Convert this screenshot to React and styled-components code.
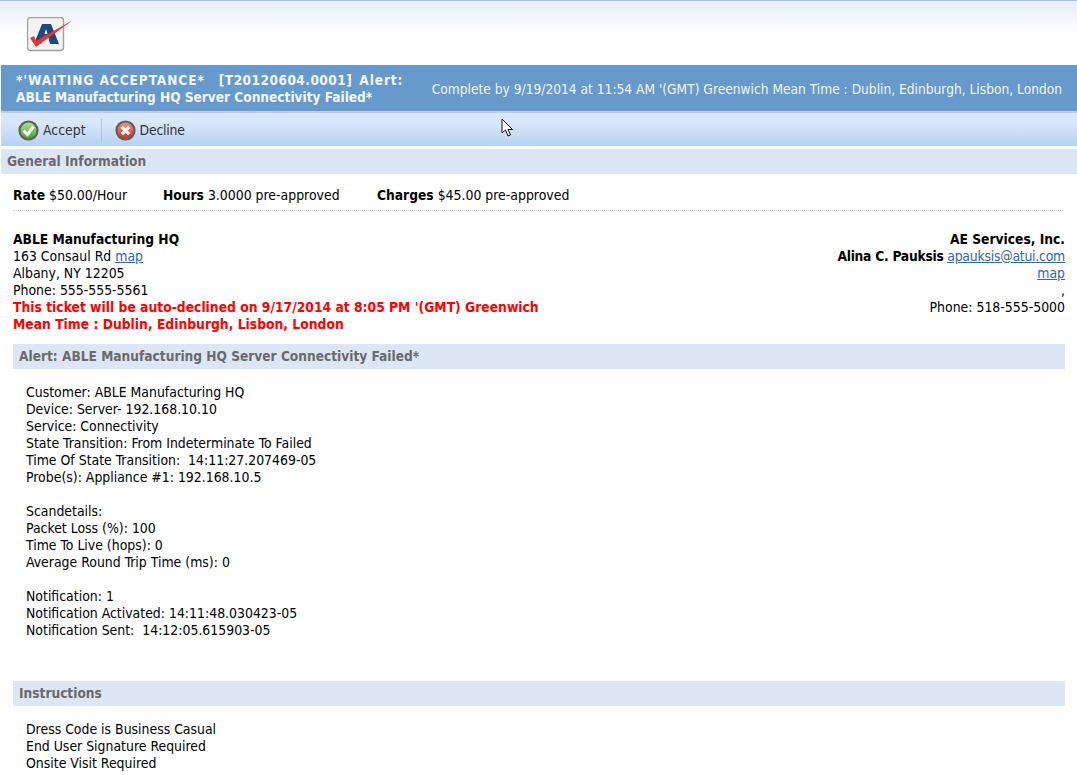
import React from 'react';
import styled, { createGlobalStyle } from 'styled-components';

const Global = createGlobalStyle`
  html, body { margin: 0; padding: 0; background: #fff; }
  body {
    font-family: "DejaVu Sans Condensed", "DejaVu Sans", sans-serif;
    font-size: 13.9px;
    line-height: 17px;
    color: #000;
  }
  b { font-size: 13.7px; }
`;

const Page = styled.div`
  position: relative;
  width: 1077px;
  height: 775px;
  overflow: hidden;
  padding-left: 1px;
  box-sizing: border-box;
`;

const LogoBar = styled.div`
  height: 65px;
  box-sizing: border-box;
  margin-left: -1px;
  padding: 16px 0 0 27px;
  border-top: 1px solid #a9c2de;
  background: linear-gradient(#e6eef8, #fff 34px);
`;

const TitleBar = styled.div`
  height: 46px;
  background: #6699cc;
  color: #f4f8fc;
  display: flex;
  align-items: center;
  justify-content: space-between;
  padding: 2px 15px 0;
  box-sizing: border-box;
`;

const Title = styled.div`
  width: 400px;
  font-weight: bold;
  font-size: 13.6px;
  white-space: nowrap;
`;

const TitleLine = styled.div`
  display: flex;
`;

const TitlePart = styled.span`
  margin-left: ${p => p.$left || 0}px;
  letter-spacing: ${p => p.$spacing}px;
`;

const DueDate = styled.div`
  white-space: nowrap;
  font-size: 13.65px;
`;

const Toolbar = styled.div`
  height: 35px;
  box-sizing: border-box;
  border-top: 2px solid #c8ccd2;
  background: linear-gradient(#d9e7fa 30%, #b6d1f2);
  display: flex;
  align-items: center;
  padding: 1px 0 0 17px;
  color: #333;
`;

const ToolButton = styled.div`
  display: flex;
  align-items: center;
  gap: 4px;
`;

const ToolDivider = styled.div`
  width: 1px;
  height: 23px;
  margin: 0 13px 0 15px;
  background: #b3c4d8;
`;

const Tight = styled.span`
  letter-spacing: -0.25px;
`;

const SectionHead = styled.div`
  height: 25px;
  line-height: 24px;
  margin-top: ${p => p.$top || 0}px;
  margin-right: ${p => (p.$inset ? 12 : 0)}px;
  margin-left: ${p => (p.$inset ? 12 : 0)}px;
  padding-left: 6px;
  background: #dce6f4;
  color: #6a6a6a;
  font-weight: bold;
  font-size: 13.6px;
`;

const RateRow = styled.div`
  display: flex;
  margin: 13px 14px 0 12px;
  padding-bottom: 6px;
  border-bottom: 1px dotted #cfcfcf;
`;

const Rate = styled.div`
  width: ${p => p.$w}px;
`;

const Address = styled.div`
  display: flex;
  justify-content: space-between;
  margin: 20px 12px 0 12px;
`;

const Left = styled.div`
  width: 560px;
`;

const Right = styled.div`
  text-align: right;
`;

const Warn = styled.div`
  color: #ff0000;
  font-weight: bold;
  font-size: 13.75px;
`;

const MapLink = styled.a`
  color: #35689c;
  text-decoration: underline;
`;

const Body = styled.div`
  margin: 15px 0 0 25px;
  white-space: pre-wrap;
`;

const Cursor = styled.svg`
  position: absolute;
  left: 501px;
  top: 118px;
`;

function Logo() {
  return (
    <svg width="47" height="35" viewBox="0 0 47 35">
      <rect x="0.5" y="0.5" width="36" height="33" rx="3" fill="#f4f4f4" stroke="#a0a0a0" strokeWidth="1.4" />
      <path d="M7 27 L15 7 H24 L32 27 H23 L21.5 21 H16 L14 27 Z M17.5 17 H20.5 L19 12 Z" fill="#1d4a7c" fillRule="evenodd" />
      <path d="M3 21 L7 19 L9 24 L46 3 L9 30 Z" fill="#e8352f" />
    </svg>
  );
}

function StatusIcon({ type }) {
  const accept = type === 'accept';
  return (
    <svg width="21" height="21" viewBox="0 0 21 21">
      <defs>
        <linearGradient id={type} x1="0" y1="0" x2="0" y2="1">
          <stop offset="0%" stopColor={accept ? '#b4e08e' : '#f29a82'} />
          <stop offset="100%" stopColor={accept ? '#47a428' : '#d42a1a'} />
        </linearGradient>
      </defs>
      <circle cx="10.5" cy="10.5" r="9" fill={`url(#${type})`} stroke="#5f5f5f" strokeWidth="2.2" />
      {accept ? (
        <path d="M5.5 10.5 L9.5 14.5 L15.5 6.5" fill="none" stroke="#fff" strokeWidth="3" />
      ) : (
        <path d="M6.8 6.8 L14.2 14.2 M14.2 6.8 L6.8 14.2" fill="none" stroke="#fff" strokeWidth="3.2" />
      )}
    </svg>
  );
}

export default function App() {
  return (
    <Page>
      <Global />
      <LogoBar><Logo /></LogoBar>
      <TitleBar>
        <Title>
          <TitleLine>
            <TitlePart $spacing={0.9}>*'WAITING ACCEPTANCE*</TitlePart>
            <TitlePart $spacing={0.45} $left={14}>[T20120604.0001]</TitlePart>
            <TitlePart $spacing={0.9} $left={7}>Alert:</TitlePart>
          </TitleLine>
          <TitleLine>
            <TitlePart $spacing={-0.02}>ABLE Manufacturing HQ Server Connectivity Failed*</TitlePart>
          </TitleLine>
        </Title>
        <DueDate>Complete by 9/19/2014 at 11:54 AM '(GMT) Greenwich Mean Time : Dublin, Edinburgh, Lisbon, London</DueDate>
      </TitleBar>
      <Toolbar>
        <ToolButton><StatusIcon type="accept" />Accept</ToolButton>
        <ToolDivider />
        <ToolButton><StatusIcon type="decline" /><Tight>Decline</Tight></ToolButton>
      </Toolbar>
      <SectionHead $top={3}>General Information</SectionHead>
      <RateRow>
        <Rate $w={150}><b>Rate</b> $50.00/Hour</Rate>
        <Rate $w={214}><b>Hours</b> 3.0000 pre-approved</Rate>
        <Rate $w={220}><b>Charges</b> $45.00 pre-approved</Rate>
      </RateRow>
      <Address>
        <Left>
          <b>ABLE Manufacturing HQ</b><br />
          163 Consaul Rd <MapLink>map</MapLink><br />
          Albany, NY 12205<br />
          Phone: 555-555-5561
          <Warn>This ticket will be auto-declined on 9/17/2014 at 8:05 PM '(GMT) Greenwich Mean Time : Dublin, Edinburgh, Lisbon, London</Warn>
        </Left>
        <Right>
          <b>AE Services, Inc.</b><br />
          <Tight><b>Alina C. Pauksis</b> <MapLink>apauksis@atui.com</MapLink></Tight><br />
          <MapLink>map</MapLink><br />
          ,<br />
          Phone: 518-555-5000
        </Right>
      </Address>
      <SectionHead $top={11} $inset>Alert: ABLE Manufacturing HQ Server Connectivity Failed*</SectionHead>
      <Body>{`Customer: ABLE Manufacturing HQ
Device: Server- 192.168.10.10
Service: Connectivity
State Transition: From Indeterminate To Failed
Time Of State Transition:  14:11:27.207469-05
Probe(s): Appliance #1: 192.168.10.5

Scandetails:
Packet Loss (%): 100
Time To Live (hops): 0
Average Round Trip Time (ms): 0

Notification: 1
Notification Activated: 14:11:48.030423-05
Notification Sent:  14:12:05.615903-05`}</Body>
      <SectionHead $top={42} $inset>Instructions</SectionHead>
      <Body>{`Dress Code is Business Casual
End User Signature Required
Onsite Visit Required`}</Body>
      <Cursor width="14" height="20" viewBox="0 0 14 20">
        <path d="M1 1 V15 L4.5 12 L7 18 L9.5 17 L7 11.5 H11.5 Z" fill="#fff" stroke="#111" strokeWidth="1" />
      </Cursor>
    </Page>
  );
}
